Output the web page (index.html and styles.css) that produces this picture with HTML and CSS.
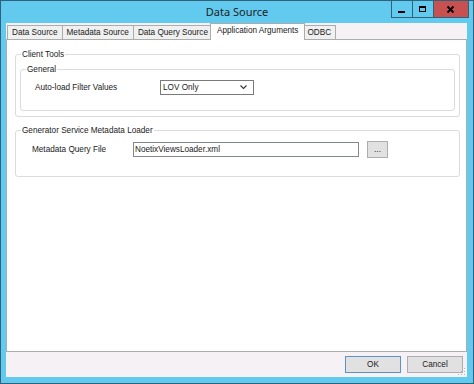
FILE: index.html
```html
<!DOCTYPE html>
<html lang="en">
<head>
    <meta charset="UTF-8">
    <meta name="viewport" content="width=device-width, initial-scale=1.0">
    <title>Data Source</title>
    <link rel="stylesheet" href="styles.css">
</head>
<body>
    <div class="window">
        <div class="titlebar">
            <span></span>
            <div class="title">Data Source</div>
            <div class="caption-buttons">
                <div class="cap">
                    <svg width="20" height="16" viewBox="0 0 20 16"><rect x="6" y="10" width="7" height="2" fill="#000"/></svg>
                </div>
                <div class="cap">
                    <svg width="20" height="16" viewBox="0 0 20 16"><rect x="6.5" y="5.5" width="6" height="5" fill="none" stroke="#000"/><rect x="6" y="5" width="7" height="2" fill="#000"/></svg>
                </div>
                <div class="cap close">
                    <svg width="34" height="16" viewBox="0 0 34 16"><path d="M13.5 5.5 L19.5 11.5 M19.5 5.5 L13.5 11.5" stroke="#000" stroke-width="1.8"/></svg>
                </div>
            </div>
        </div>

        <div class="client">
            <div class="tabs">
                <div class="tab">Data Source</div>
                <div class="tab">Metadata Source</div>
                <div class="tab">Data Query Source</div>
                <div class="tab active">Application Arguments</div>
                <div class="tab">ODBC</div>
            </div>

            <div class="page">
                <div class="group">
                    <div class="group-title">Client Tools</div>
                    <div class="group inner">
                        <div class="group-title">General</div>
                        <div class="row general-row">
                            <span class="field-label wide">Auto-load Filter Values</span>
                            <div class="combo">
                                <span>LOV Only</span>
                                <svg width="7" height="5" viewBox="0 0 7 5"><path d="M0.5 0.5 L3.5 3.5 L6.5 0.5" fill="none" stroke="#333" stroke-width="1.1"/></svg>
                            </div>
                        </div>
                    </div>
                </div>

                <div class="group loader">
                    <div class="group-title">Generator Service Metadata Loader</div>
                    <div class="row loader-row">
                        <span class="field-label">Metadata Query File</span>
                        <div class="textbox">NoetixViewsLoader.xml</div>
                        <button class="browse">...</button>
                    </div>
                </div>
            </div>

            <div class="footer">
                <button class="btn default">OK</button>
                <button class="btn">Cancel</button>
                <svg class="grip" width="8" height="8" viewBox="0 0 8 8">
                    <rect x="6" y="0" width="1" height="1" fill="#b8b8b8"/>
                    <rect x="3" y="3" width="1" height="1" fill="#b8b8b8"/>
                    <rect x="6" y="3" width="1" height="1" fill="#b8b8b8"/>
                    <rect x="0" y="6" width="1" height="1" fill="#b8b8b8"/>
                    <rect x="3" y="6" width="1" height="1" fill="#b8b8b8"/>
                    <rect x="6" y="6" width="1" height="1" fill="#b8b8b8"/>
                </svg>
            </div>
        </div>
    </div>
</body>
</html>
```

FILE: styles.css
```css
body {
    margin: 0;
    font-family: "Liberation Sans", Arial, sans-serif;
    font-size: 8.2px;
    color: #1a1a1a;
}
.window {
    width: 474px;
    height: 384px;
    box-sizing: border-box;
    border: 1px solid #2f6278;
    background-color: #62c9ef;
    display: flex;
    flex-direction: column;
}
.titlebar {
    height: 22px;
    display: grid;
    grid-template-columns: 1fr auto 1fr;
    padding: 0 4px;
}
.title {
    font-family: "Noto Sans", sans-serif;
    font-size: 11px;
    line-height: 22px;
    color: #1e1e1e;
}
.caption-buttons {
    justify-self: end;
    align-self: start;
    display: flex;
    height: 16px;
    border: 1px solid #2f6278;
    border-top: none;
}
.cap {
    width: 20px;
    height: 16px;
    border-right: 1px solid #2f6278;
}
.cap svg {
    display: block;
}
.cap.close {
    width: 34px;
    border-right: none;
    background-color: #c75050;
}
.client {
    flex: 1;
    margin: 0 6px 6px 5px;
    background-color: #f5f1f5;
    display: flex;
    flex-direction: column;
    position: relative;
}
.tabs {
    height: 16px;
    display: flex;
    align-items: flex-end;
    padding-left: 1px;
}
.tab {
    box-sizing: border-box;
    height: 14px;
    line-height: 13px;
    padding: 0 4px;
    margin-right: -1px;
    border: 1px solid #acacac;
    border-bottom: none;
    background-color: #f0f0f0;
    white-space: nowrap;
}
.tab.active {
    position: relative;
    z-index: 1;
    height: 17px;
    line-height: 14px;
    padding: 0 6px;
    margin: 0 -3px -1px -2px;
    background-color: #fff;
}
.page {
    flex: 1;
    border: 1px solid #acacac;
    background-color: #fff;
    padding: 14px 6px 0 8px;
}
.group {
    border: 1px solid #dcdcdc;
    border-radius: 3px;
    padding-bottom: 5px;
}
.group-title {
    width: max-content;
    margin: -6px 0 0 5px;
    padding: 0 1px;
    line-height: 11px;
    background-color: #fff;
}
.group.inner {
    margin: 9px 4px 0;
    padding-bottom: 0;
}
.group.loader {
    margin-top: 13px;
    padding-bottom: 0;
}
.row {
    display: flex;
    align-items: center;
}
.general-row {
    margin: 5px 0 15px 14px;
}
.loader-row {
    margin: 5px 0 18px 16px;
}
.field-label {
    width: 101px;
}
.field-label.wide {
    width: 125px;
}
.combo {
    box-sizing: border-box;
    width: 94px;
    height: 15px;
    border: 1px solid #7a7a7a;
    background-color: #fff;
    display: flex;
    align-items: center;
    justify-content: space-between;
    padding: 0 6px 0 2px;
}
.textbox {
    box-sizing: border-box;
    width: 226px;
    height: 15px;
    line-height: 13px;
    border: 1px solid #828790;
    padding-left: 1px;
    margin-right: 8px;
}
.browse, .btn {
    font-family: "Liberation Sans", Arial, sans-serif;
    font-size: 8.2px;
    box-sizing: border-box;
    background-color: #e1e1e1;
    border: 1px solid #adadad;
    padding: 0;
    color: #1a1a1a;
}
.browse {
    width: 21px;
    height: 17px;
}
.footer {
    height: 25px;
    box-sizing: border-box;
    display: flex;
    justify-content: flex-end;
    gap: 6px;
    padding: 4px 4px 0 0;
}
.btn {
    width: 56px;
    height: 17px;
}
.btn.default {
    border-color: #5b93c9;
}
.grip {
    position: absolute;
    right: 1px;
    bottom: 1px;
}
```
